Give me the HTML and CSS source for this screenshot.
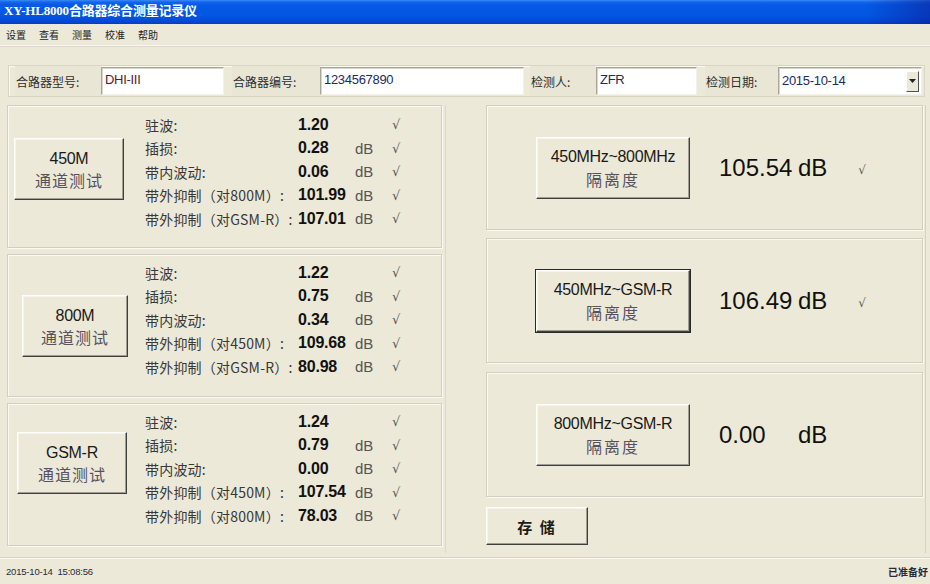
FILE: index.html
```html
<!DOCTYPE html>
<html>
<head>
<meta charset="utf-8">
<title>XY-HL8000</title>
<link rel="stylesheet" href="styles.css">
</head>
<body>
<div class="window">
  <div class="titlebar">XY-HL8000合路器综合测量记录仪</div>
  <div class="menubar">
    <span>设置</span><span>查看</span><span>测量</span><span>校准</span><span>帮助</span>
  </div>
  <div class="formbar">
    <span class="flabel w1">合路器型号:</span>
    <div class="edit e1 red">DHI-III</div>
    <span class="flabel w2">合路器编号:</span>
    <div class="edit e2 navy">1234567890</div>
    <span class="flabel w3">检测人:</span>
    <div class="edit e3 navy">ZFR</div>
    <span class="flabel w4">检测日期:</span>
    <div class="edit combo navy">2015-10-14<span class="drop"><svg width="7" height="4" viewBox="0 0 7 4"><path d="M0 0h7L3.5 4z" fill="#222"/></svg></span></div>
  </div>

  <div class="main">
    <div class="leftcol">
      <div class="gpanel p1">
        <button class="btn chbtn b1"><span class="l1">450M</span><span class="l2">通道测试</span></button>
        <div class="rows">
          <span class="lbl">驻波:</span><span class="val">1.20</span><span class="unit"></span><span class="ok">√</span>
          <span class="lbl">插损:</span><span class="val">0.28</span><span class="unit">dB</span><span class="ok">√</span>
          <span class="lbl">带内波动:</span><span class="val">0.06</span><span class="unit">dB</span><span class="ok">√</span>
          <span class="lbl">带外抑制（对800M）:</span><span class="val">101.99</span><span class="unit">dB</span><span class="ok">√</span>
          <span class="lbl">带外抑制（对GSM-R）:</span><span class="val">107.01</span><span class="unit">dB</span><span class="ok">√</span>
        </div>
      </div>
      <div class="gpanel p2">
        <button class="btn chbtn b2"><span class="l1">800M</span><span class="l2">通道测试</span></button>
        <div class="rows">
          <span class="lbl">驻波:</span><span class="val">1.22</span><span class="unit"></span><span class="ok">√</span>
          <span class="lbl">插损:</span><span class="val">0.75</span><span class="unit">dB</span><span class="ok">√</span>
          <span class="lbl">带内波动:</span><span class="val">0.34</span><span class="unit">dB</span><span class="ok">√</span>
          <span class="lbl">带外抑制（对450M）:</span><span class="val">109.68</span><span class="unit">dB</span><span class="ok">√</span>
          <span class="lbl">带外抑制（对GSM-R）:</span><span class="val">80.98</span><span class="unit">dB</span><span class="ok">√</span>
        </div>
      </div>
      <div class="gpanel p3">
        <button class="btn chbtn b3"><span class="l1">GSM-R</span><span class="l2">通道测试</span></button>
        <div class="rows">
          <span class="lbl">驻波:</span><span class="val">1.24</span><span class="unit"></span><span class="ok">√</span>
          <span class="lbl">插损:</span><span class="val">0.79</span><span class="unit">dB</span><span class="ok">√</span>
          <span class="lbl">带内波动:</span><span class="val">0.00</span><span class="unit">dB</span><span class="ok">√</span>
          <span class="lbl">带外抑制（对450M）:</span><span class="val">107.54</span><span class="unit">dB</span><span class="ok">√</span>
          <span class="lbl">带外抑制（对800M）:</span><span class="val">78.03</span><span class="unit">dB</span><span class="ok">√</span>
        </div>
      </div>
    </div>

    <div class="rightcol">
      <div class="rpanel">
        <button class="btn isobtn"><span class="l1">450MHz~800MHz</span><span class="l2">隔离度</span></button>
        <span class="bigval">105.54</span><span class="bigunit">dB</span><span class="rok">√</span>
      </div>
      <div class="rpanel r2">
        <button class="btn isobtn focus"><span class="l1">450MHz~GSM-R</span><span class="l2">隔离度</span></button>
        <span class="bigval">106.49</span><span class="bigunit">dB</span><span class="rok">√</span>
      </div>
      <div class="rpanel r3">
        <button class="btn isobtn"><span class="l1">800MHz~GSM-R</span><span class="l2">隔离度</span></button>
        <span class="bigval">0.00</span><span class="bigunit">dB</span>
      </div>
      <button class="btn savebtn">存 储</button>
    </div>
  </div>

  <div class="statusbar">
    <span class="st-left">2015-10-14&nbsp; 15:08:56</span>
    <span class="st-right">已准备好</span>
  </div>
</div>
</body>
</html>
```

FILE: styles.css
```css
* { box-sizing: border-box; }
html, body { margin: 0; padding: 0; }
body {
  width: 930px;
  height: 584px;
  overflow: hidden;
  background: #ece9d8;
  font-family: "Noto Sans CJK SC", "Liberation Sans", sans-serif;
  color: #222;
}
.window {
  display: flex;
  flex-direction: column;
  height: 584px;
}

/* title bar */
.titlebar {
  height: 24px;
  padding-left: 4px;
  line-height: 23px;
  color: #fff;
  font: bold 13px "Liberation Serif", "Noto Sans CJK SC", serif;
  letter-spacing: -0.2px;
  background:
    linear-gradient(to right, rgba(0,0,0,0) 93%, rgba(10,30,150,0.55) 100%),
    linear-gradient(to bottom, #3d8af7 0, #1466ee 2px, #0559e6 5px, #0356e2 16px, #0349d6 21px, #0a3cbf 24px);
}

/* menu */
.menubar {
  height: 22px;
  display: flex;
  align-items: center;
  gap: 13px;
  padding-left: 6px;
  font-size: 10px;
  color: #222;
  background: #ece9d8;
  border-bottom: 1px solid #f9f8f2;
  box-shadow: 0 1px 0 #dcd9c8;
}

/* form bar */
.formbar {
  margin: 19px 5px 0 8px;
  height: 32px;
  display: flex;
  align-items: center;
  padding-left: 6px;
  border: 1px solid #d8d5c4;
  box-shadow: inset 1px 1px 0 #faf9f3;
}
.flabel {
  font-size: 12px;
  color: #2e2e2e;
  white-space: nowrap;
  align-self: stretch;
  display: flex;
  align-items: center;
  background: #e9e6d6;
  padding-left: 1px;
}
.w1 { width: 86px; }
.w2 { width: 88px; margin-left: 8px; }
.w3 { width: 66px; margin-left: 6px; }
.w4 { width: 73px; margin-left: 8px; }
.edit {
  height: 28px;
  background: #fff;
  border: 1px solid;
  border-color: #a8a699 #f2f1ea #f2f1ea #a8a699;
  box-shadow: inset 1px 1px 0 #d8d5ca;
  font: 13px "Liberation Sans", sans-serif;
  line-height: 24px;
  padding-left: 3px;
  letter-spacing: -0.3px;
}
.red { color: #5a1a2a; }
.navy { color: #1d2b5c; }
.e1 { width: 123px; }
.e2 { width: 204px; }
.e3 { width: 101px; }
.combo {
  width: 144px;
  display: flex;
  align-items: center;
  justify-content: space-between;
  padding-right: 2px;
}
.drop {
  width: 13px;
  height: 21px;
  display: flex;
  align-items: center;
  justify-content: center;
  background: #ece9d8;
  border: 1px solid;
  border-color: #fff #555 #555 #fff;
}

/* main */
.main {
  display: flex;
  margin-top: 8px;
  height: 448px;
}
.leftcol {
  width: 446px;
  padding-left: 7px;
  display: flex;
  flex-direction: column;
  gap: 6px;
  border-right: 1px solid #dcd9c8;
}
.gpanel {
  width: 435px;
  height: 143px;
  display: grid;
  grid-template-columns: 137px 1fr;
  align-items: start;
  border: 1px solid #d2cfbe;
  box-shadow: inset 1px 1px 0 #faf9f3, 1px 1px 0 #faf9f3;
}

/* buttons */
.btn {
  display: flex;
  flex-direction: column;
  align-items: center;
  justify-content: center;
  padding: 0;
  background: #ece9d8;
  border: 1px solid;
  border-color: #fdfdfb #3f3f3f #3f3f3f #fdfdfb;
  box-shadow: inset -1px -1px 0 #a09e92, inset 1px 1px 0 #f5f4ee;
  font-family: "Liberation Sans", "Noto Sans CJK SC", sans-serif;
  color: #1a1a1a;
  cursor: default;
}
.btn .l1 {
  font-size: 16px;
  line-height: 21px;
  letter-spacing: -0.3px;
}
.btn .l2 {
  font-family: "Noto Sans CJK SC", sans-serif;
  font-size: 16px;
  line-height: 22px;
  color: #56525f;
  letter-spacing: 1px;
}
.chbtn { height: 62px; }
.b1 { width: 110px; margin: 32px 0 0 6px; }
.b2 { width: 106px; margin: 40px 0 0 14px; }
.b3 { width: 110px; margin: 28px 0 0 9px; }

.rows {
  display: grid;
  grid-template-columns: 153px 57px 37px 20px;
  grid-auto-rows: 23.5px;
  align-items: center;
  padding-top: 6px;
}
.p1 .rows { padding-top: 7px; }
.lbl {
  font-size: 14px;
  letter-spacing: 0.2px;
  color: #383838;
  white-space: nowrap;
}
.val {
  font: bold 16px "Liberation Sans", sans-serif;
  color: #111;
  letter-spacing: -0.2px;
}
.unit {
  font: 15px "Liberation Sans", sans-serif;
  color: #555;
}
.ok {
  font: 13px "DejaVu Sans", sans-serif;
  color: #555;
}

/* right column */
.rightcol {
  width: 480px;
  padding-left: 40px;
  display: flex;
  flex-direction: column;
  border-right: 1px solid #d6d3c2;
}
.rpanel {
  width: 437px;
  height: 125px;
  display: flex;
  align-items: center;
  border: 1px solid #d2cfbe;
  box-shadow: inset 1px 1px 0 #faf9f3, 1px 1px 0 #faf9f3;
}
.r2 { margin-top: 8px; }
.r3 { margin-top: 9px; }
.isobtn {
  width: 154px;
  height: 62px;
  margin-left: 49px;
}
.isobtn .l1 { line-height: 22px; }
.isobtn .l2 { letter-spacing: 2px; }
.isobtn.focus {
  outline: 1px solid #2a2a2a;
}
.bigval {
  width: 79px;
  margin-left: 29px;
  font: 24px "Liberation Sans", sans-serif;
  color: #111;
  letter-spacing: 0;
}
.bigunit {
  font: 24px "Liberation Sans", sans-serif;
  color: #111;
}
.rok {
  margin-left: 31px;
  margin-top: 4px;
  font: 12px "DejaVu Sans", sans-serif;
  color: #555;
}
.savebtn {
  width: 102px;
  height: 38px;
  margin-top: 10px;
  font: bold 15px "Noto Sans CJK SC", serif;
  letter-spacing: 2px;
  color: #1a1a1a;
}

/* status bar */
.statusbar {
  margin-top: auto;
  height: 27px;
  display: flex;
  align-items: center;
  justify-content: space-between;
  padding: 0 2px 0 6px;
  border-top: 1px solid #d6d3c2;
  box-shadow: inset 0 1px 0 #faf9f3;
  font-size: 9px;
  color: #2a2a3a;
}
.st-left { font-family: "Liberation Sans", sans-serif; font-size: 9.5px; letter-spacing: -0.2px; }
.st-right { font-size: 10px; font-weight: bold; }
```
